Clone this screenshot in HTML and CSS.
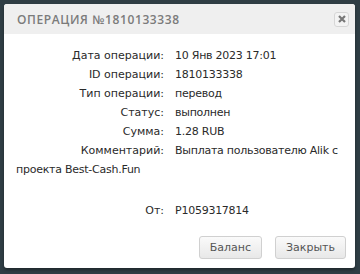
FILE: index.html
```html
<!DOCTYPE html>
<html>
<head>
<meta charset="utf-8">
<link rel="stylesheet" href="styles.css">
</head>
<body>
<div class="dialog">
  <div class="header">
    <span class="title">Операция №1810133338</span>
    <span class="close"><svg width="8" height="8" viewBox="0 0 8 8"><path d="M1 1L7 7M7 1L1 7" stroke="#777" stroke-width="2.2" stroke-linecap="butt"/></svg></span>
  </div>
  <div class="content">
    <div class="row"><span class="label">Дата операции:</span><span class="value">10 Янв 2023 17:01</span></div>
    <div class="row"><span class="label">ID операции:</span><span class="value">1810133338</span></div>
    <div class="row"><span class="label">Тип операции:</span><span class="value">перевод</span></div>
    <div class="row"><span class="label">Статус:</span><span class="value">выполнен</span></div>
    <div class="row"><span class="label">Сумма:</span><span class="value">1.28 RUB</span></div>
    <div class="row"><span class="label">Комментарий:</span><span class="value">Выплата пользователю Alik с</span></div>
    <div class="row value">проекта Best-Cash.Fun</div>
    <div class="row spaced"><span class="label">От:</span><span class="value">P1059317814</span></div>
  </div>
  <div class="footer">
    <button class="btn">Баланс</button>
    <button class="btn">Закрыть</button>
  </div>
</div>
</body>
</html>
```
FILE: styles.css
```css
html, body {
  margin: 0;
  padding: 0;
}
body {
  background: #2f3d44;
  width: 360px;
  height: 274px;
  overflow: hidden;
}
.dialog {
  margin: 4px 0 0 4px;
  width: 351px;
  height: 264px;
  background: #fff;
  border-radius: 3px;
  display: flex;
  flex-direction: column;
  box-shadow: 0 2px 3px rgba(0,0,0,0.35);
  overflow: hidden;
}
.header {
  height: 30px;
  background: #efefef;
  display: flex;
  align-items: center;
  justify-content: space-between;
  padding: 0 6px 0 13px;
}
.title {
  font-family: "Open Sans", sans-serif;
  font-weight: 600;
  font-size: 12px;
  letter-spacing: 0.6px;
  text-transform: uppercase;
  color: #7b7b7b;
}
.close {
  width: 13px;
  height: 13px;
  border: 1px solid #d6d6d6;
  border-radius: 3px;
  background: #f3f3f3;
  display: flex;
  align-items: center;
  justify-content: center;
}
.content {
  flex: 1;
  padding: 12px 12px 0 12px;
  font-family: "DejaVu Sans", sans-serif;
  font-size: 11px;
  line-height: 19px;
  color: #2a2a2a;
}
.row {
  white-space: nowrap;
}
.label {
  display: inline-block;
  width: 148px;
  text-align: right;
  margin-right: 11px;
}
.value {
  letter-spacing: -0.25px;
}
.spaced {
  margin-top: 22px;
}
.footer {
  display: flex;
  justify-content: flex-end;
  gap: 13px;
  padding: 0 9px 9px 0;
}
.btn {
  height: 23px;
  padding: 0 10px;
  font-family: "DejaVu Sans", sans-serif;
  font-size: 11px;
  color: #555;
  background: linear-gradient(#fafafa, #e8e8e8);
  border: 1px solid #d0d0d0;
  border-radius: 3px;
}
```
